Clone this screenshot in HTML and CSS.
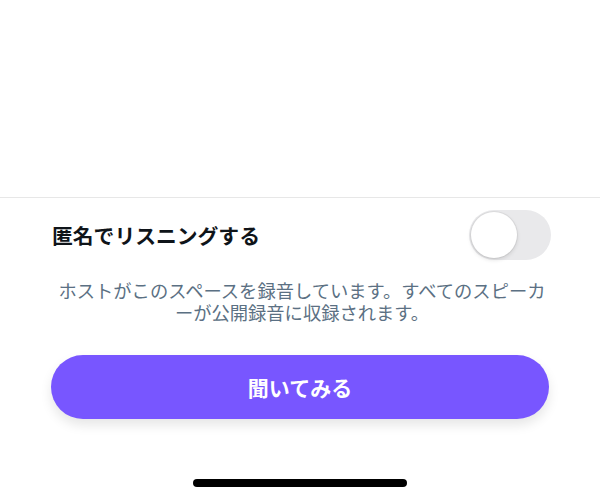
FILE: index.html
```html
<!DOCTYPE html>
<html lang="ja">
<head>
<meta charset="utf-8">
<link rel="stylesheet" href="styles.css">
</head>
<body>
<div class="screen">
  <div class="top"></div>
  <div class="sheet">
    <div class="row">
      <div class="title">匿名でリスニングする</div>
      <div class="switch"><div class="knob"></div></div>
    </div>
    <p class="desc">ホストがこのスペースを録音しています。すべてのスピーカーが公開録音に収録されます。</p>
    <button class="listen">聞いてみる</button>
    <div class="home-wrap"><div class="home"></div></div>
  </div>
</div>
</body>
</html>
```
FILE: styles.css
```css
* { box-sizing: border-box; }
html, body { margin: 0; padding: 0; background: #fff; }
body {
  font-family: "Noto Sans CJK JP", "Noto Sans", sans-serif;
  width: 600px;
  height: 501px;
  overflow: hidden;
}
.screen { display: flex; flex-direction: column; height: 501px; }
.top { height: 198px; border-bottom: 1px solid #e7e7e7; }
.sheet { display: flex; flex-direction: column; padding: 0 51px; }
.row {
  display: flex;
  align-items: center;
  justify-content: space-between;
  padding-top: 12px;
  height: 62px;
}
.title {
  font-size: 20.8px;
  font-weight: 700;
  color: #0f1419;
  line-height: 26px;
  padding-left: 1px;
}
.switch {
  width: 82px;
  height: 50px;
  border-radius: 25px;
  background: #e9e9eb;
  position: relative;
  margin-right: -2px;
}
.knob {
  position: absolute;
  left: 2px;
  top: 2px;
  width: 46px;
  height: 46px;
  border-radius: 50%;
  background: #fff;
  box-shadow: 0 2px 4px rgba(0,0,0,0.12), 0 0 0 1px rgba(0,0,0,0.05);
}
.desc {
  margin: 19px 0 0;
  padding: 0 0 0 4px;
  font-size: 18.3px;
  line-height: 22px;
  color: #5b7083;
  text-align: center;
  line-break: anywhere;
  text-spacing-trim: space-all;
}
.listen {
  margin-top: 32px;
  height: 64px;
  width: 498px;
  border: none;
  border-radius: 32px;
  background: #7856ff;
  color: #fff;
  font-family: "Noto Sans CJK JP", sans-serif;
  font-size: 21px;
  font-weight: 700;
  box-shadow: 0 6px 12px rgba(0,0,0,0.10);
  padding: 0;
}
.home-wrap { display: flex; justify-content: center; margin-top: 60px; }
.home { width: 214px; height: 8px; border-radius: 4px; background: #000; }
```
